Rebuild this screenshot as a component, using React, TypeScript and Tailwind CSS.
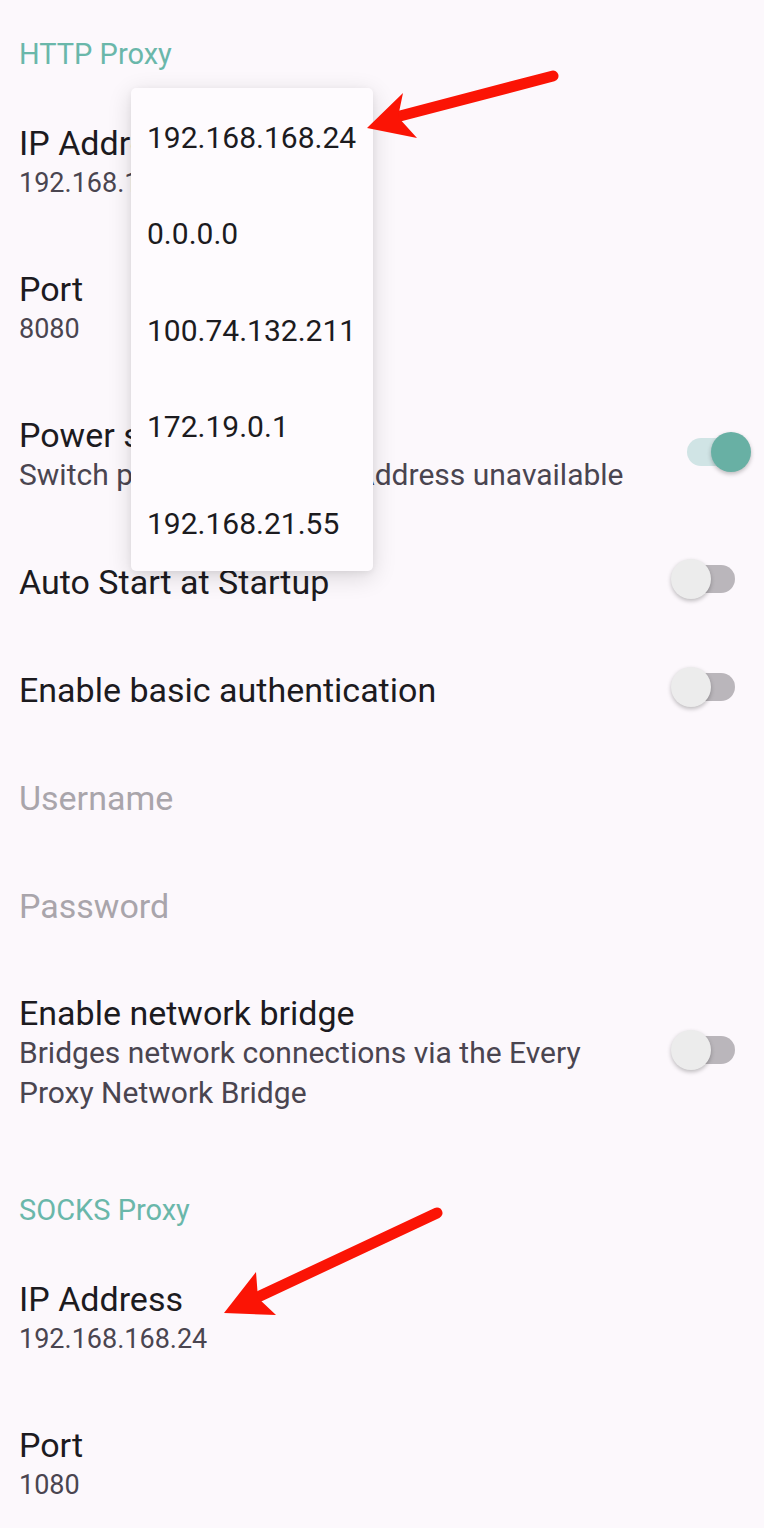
import React from 'react';

const FONT = { fontFamily: 'Roboto, "Noto Sans", sans-serif' };

function Switch({ on = false }: { on?: boolean }) {
  return (
    <div className="relative h-[40px] w-[80px] shrink-0">
      {on ? (
        <>
          <div className="absolute left-[16px] top-[6px] h-[28px] w-[62px] rounded-full bg-[#d0e4e5]" />
          <div className="absolute left-[40px] top-0 h-[40px] w-[40px] rounded-full bg-[#68b0a4] shadow-[0_2px_4px_rgba(0,0,0,0.25)]" />
        </>
      ) : (
        <>
          <div className="absolute left-[2px] top-[6px] h-[28px] w-[62px] rounded-full bg-[#bab6bb]" />
          <div className="absolute left-0 top-0 h-[40px] w-[40px] rounded-full bg-[#ececec] shadow-[0_2px_4px_rgba(0,0,0,0.25)]" />
        </>
      )}
    </div>
  );
}

function Header({ label, top }: { label: string; top: string }) {
  return (
    <div className={`${top} pb-[16px] pl-[19px] text-[29px] leading-[40px] text-[#6ab7aa]`}>{label}</div>
  );
}

function Row({
  title,
  lines = [],
  numeric = false,
  toggle,
  disabled = false,
}: {
  title: string;
  lines?: string[];
  numeric?: boolean;
  toggle?: 'on' | 'off';
  disabled?: boolean;
}) {
  return (
    <div className={`flex items-center pl-[19px] pr-[13px] ${lines.length ? 'py-[33px]' : 'py-[34px]'}`}>
      <div className="min-w-0 flex-1">
        <div
          className={`whitespace-nowrap text-[34px] leading-[40px] ${disabled ? 'text-[#a9a5ab]' : 'text-[#1c1b1f]'}`}
        >
          {title}
        </div>
        {lines.map((l) => (
          <div
            key={l}
            className={`whitespace-nowrap leading-[40px] text-[#4a4550] ${numeric ? 'text-[27px]' : 'text-[30px]'}`}
          >
            {l}
          </div>
        ))}
      </div>
      {toggle && (
        <div className="-mt-[6px]">
          <Switch on={toggle === 'on'} />
        </div>
      )}
    </div>
  );
}

const ADDRESSES = ['192.168.168.24', '0.0.0.0', '100.74.132.211', '172.19.0.1', '192.168.21.55'];

export default function App() {
  return (
    <div className="relative h-[1528px] w-[764px] overflow-hidden bg-[#fcf8fc]" style={FONT}>
      <Header label="HTTP Proxy" top="pt-[34px]" />
      <Row title="IP Address" lines={['192.168.168.24']} numeric />
      <Row title="Port" lines={['8080']} numeric />
      <Row title="Power saving mode" lines={['Switch proxy off when IP Address unavailable']} toggle="on" />
      <Row title="Auto Start at Startup" toggle="off" />
      <Row title="Enable basic authentication" toggle="off" />
      <Row title="Username" disabled />
      <Row title="Password" disabled />
      <Row
        title="Enable network bridge"
        lines={['Bridges network connections via the Every', 'Proxy Network Bridge']}
        toggle="off"
      />
      <Header label="SOCKS Proxy" top="pt-[44px]" />
      <Row title="IP Address" lines={['192.168.168.24']} numeric />
      <Row title="Port" lines={['1080']} numeric />

      {/* address picker menu */}
      <div className="absolute left-[131px] top-[88px] h-[483px] w-[242px] rounded-[5px] bg-[#fefbfe] pt-[1px] shadow-[0_6px_24px_rgba(0,0,0,0.14),0_2px_6px_rgba(0,0,0,0.06)]">
        {ADDRESSES.map((a) => (
          <div key={a} className="flex h-[96.5px] items-center pl-[16px] text-[30px] text-[#1c1b1f]">
            {a}
          </div>
        ))}
      </div>

      {/* annotation arrows */}
      <svg className="pointer-events-none absolute left-0 top-0" width="764" height="1528" viewBox="0 0 764 1528">
        <line x1="553" y1="76" x2="400" y2="116" stroke="#fb1405" strokeWidth="11" strokeLinecap="round" />
        <polygon points="367,128 403,93 398,117 417,138" fill="#fb1405" />
        <line x1="437" y1="1213" x2="260" y2="1296" stroke="#fb1405" strokeWidth="11" strokeLinecap="round" />
        <polygon points="224,1313 256,1272 258,1298 276,1315" fill="#fb1405" />
      </svg>
    </div>
  );
}
